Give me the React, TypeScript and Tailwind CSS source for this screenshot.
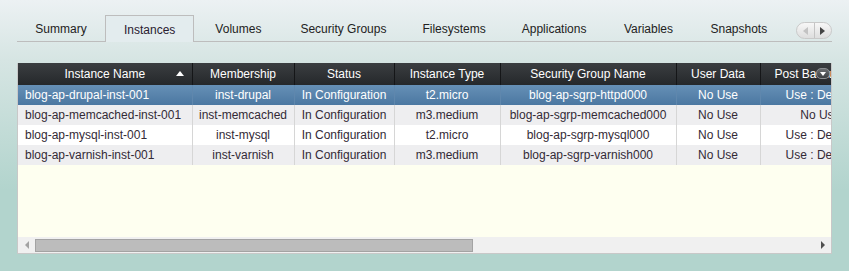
const tabs = [
  "Summary",
  "Instances",
  "Volumes",
  "Security Groups",
  "Filesystems",
  "Applications",
  "Variables",
  "Snapshots",
];

const rows = [
  ["blog-ap-drupal-inst-001", "inst-drupal", "In Configuration", "t2.micro", "blog-ap-sgrp-httpd000", "No Use", "Use : Default"],
  ["blog-ap-memcached-inst-001", "inst-memcached", "In Configuration", "m3.medium", "blog-ap-sgrp-memcached000", "No Use", "No Use"],
  ["blog-ap-mysql-inst-001", "inst-mysql", "In Configuration", "t2.micro", "blog-ap-sgrp-mysql000", "No Use", "Use : Default"],
  ["blog-ap-varnish-inst-001", "inst-varnish", "In Configuration", "m3.medium", "blog-ap-sgrp-varnish000", "No Use", "Use : Default"],
];

const widths = [174, 102, 100, 106, 176, 84, 120];

export default function App() {
  return (
    <div className="w-[849px] h-[271px] overflow-hidden px-[17px] pt-[16px] font-['Liberation_Sans',Arial,sans-serif] text-[12px] bg-[linear-gradient(180deg,#ecf1f3_0px,#d6e5e3_60px,#b2d4cd_190px)]">
      {/* Tab strip */}
      <div className="flex items-end h-[26px] border-b border-[#bdbdbd]">
        {tabs.map((t) => {
          const active = t === "Instances";
          return (
            <div
              key={t}
              className={
                active
                  ? "min-w-[88px] h-[27px] -mb-px px-[18px] pt-[2px] flex items-center justify-center border border-b-0 border-[#bdbdbd] bg-[#e3ecee] text-[#2a2030]"
                  : "min-w-[88px] h-[26px] px-[18px] pt-[2px] flex items-center justify-center text-[#222]"
              }
            >
              {t}
            </div>
          );
        })}
        <div className="ml-auto mb-[2px] flex h-[17px] w-[36px] rounded-full border border-[#c9c9c9] bg-[linear-gradient(180deg,#f7f7f7,#dedede)] overflow-hidden">
          <div className="flex-1 flex items-center justify-center border-r border-[#c4c4c4]">
            <div className="w-0 h-0 border-y-[4px] border-y-transparent border-r-[5px] border-r-[#c3c3c3]" />
          </div>
          <div className="flex-1 flex items-center justify-center">
            <div className="w-0 h-0 border-y-[4px] border-y-transparent border-l-[5px] border-l-[#444]" />
          </div>
        </div>
      </div>

      {/* Grid */}
      <div className="mt-[21px] w-[815px] h-[191px] flex flex-col border-l border-r border-b border-[#c8c8c8] bg-[#fefff0]">
        <div className="relative flex-1 overflow-hidden">
          <table className="table-fixed border-collapse w-[862px]">
            <colgroup>
              {widths.map((w, i) => (
                <col key={i} style={{ width: w }} />
              ))}
            </colgroup>
            <thead>
              <tr className="h-[22px] bg-[linear-gradient(180deg,#3b3e41,#25282b)] text-white">
                <th className="relative font-normal border-r border-[#151618] text-center">
                  Instance Name
                  <span className="absolute right-[8px] top-[8px] w-0 h-0 border-x-[4px] border-x-transparent border-b-[5px] border-b-white" />
                </th>
                <th className="font-normal border-r border-[#151618] text-center">Membership</th>
                <th className="font-normal border-r border-[#151618] text-center">Status</th>
                <th className="font-normal border-r border-[#151618] text-center">Instance Type</th>
                <th className="font-normal border-r border-[#151618] text-center">Security Group Name</th>
                <th className="font-normal border-r border-[#151618] text-center">User Data</th>
                <th className="font-normal text-left pl-[14px] whitespace-nowrap overflow-hidden">Post Backup Script</th>
              </tr>
            </thead>
            <tbody>
              {rows.map((r, i) => {
                const sel = i === 0;
                const rowCls = sel
                  ? "h-[20px] bg-[linear-gradient(180deg,#6690b6,#4b77a1)] text-white"
                  : i % 2 === 1
                  ? "h-[20px] bg-[#eeeef0] text-[#332a36]"
                  : "h-[20px] bg-white text-[#332a36]";
                return (
                  <tr key={i} className={rowCls}>
                    {r.map((c, j) => (
                      <td
                        key={j}
                        className={
                          (j === 0 ? "text-left pl-[7px] " : "text-center ") +
                          (j < 6 ? (sel ? "border-r border-[#5f87ad] " : "border-r border-[#d6d6d6] ") : "") +
                          "whitespace-nowrap overflow-hidden"
                        }
                      >
                        {c}
                      </td>
                    ))}
                  </tr>
                );
              })}
            </tbody>
          </table>
          <div className="absolute right-[1px] top-[5px] w-[14px] h-[11px] rounded-[5px] bg-[linear-gradient(180deg,#6a6d70,#3c3f42)] border border-[#8a8d90] flex items-center justify-center">
            <div className="w-0 h-0 border-x-[3.5px] border-x-transparent border-t-[4px] border-t-white" />
          </div>
        </div>

        {/* Horizontal scrollbar */}
        <div className="h-[16px] flex items-center bg-[#f0f0f0]">
          <div className="w-[17px] flex items-center justify-center">
            <div className="w-0 h-0 border-y-[4px] border-y-transparent border-r-[4px] border-r-[#a3a3a3]" />
          </div>
          <div className="w-[438px] h-[13px] bg-[#bcbcbc] border border-[#a3a3a3]" />
          <div className="ml-auto w-[17px] flex items-center justify-center">
            <div className="w-0 h-0 border-y-[4px] border-y-transparent border-l-[4px] border-l-[#505050]" />
          </div>
        </div>
      </div>
    </div>
  );
}
